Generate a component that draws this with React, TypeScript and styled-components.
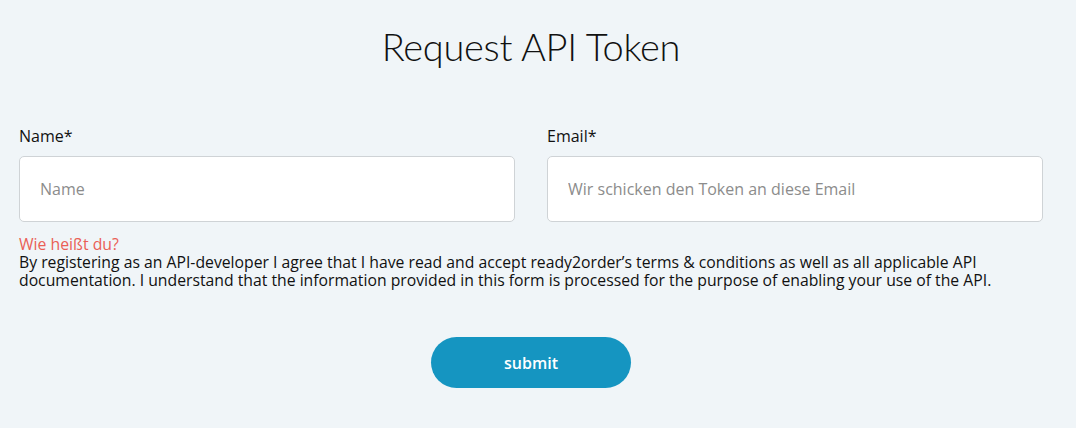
import React from "react"
import styled, { createGlobalStyle } from "styled-components"

const GlobalStyle = createGlobalStyle`
  html, body {
    margin: 0;
    padding: 0;
    background: #f0f5f8;
  }
  body {
    font-family: "Open Sans", "Liberation Sans", sans-serif;
    color: #111;
  }
`

const Page = styled.div`
  width: 1024px;
  padding: 22px 0 40px 19px;
`

const Title = styled.h1`
  margin: 0 0 55px;
  font-family: Lato, "Open Sans", sans-serif;
  font-weight: 300;
  font-size: 38px;
  line-height: 48px;
  letter-spacing: -0.3px;
  text-align: center;
  color: #111;
`

const Fields = styled.div`
  display: grid;
  grid-template-columns: 1fr 1fr;
  column-gap: 32px;
`

const Field = styled.label`
  display: flex;
  flex-direction: column;
`

const Label = styled.span`
  font-size: 16px;
  line-height: 22px;
  margin-bottom: 9px;
  color: #111;
`

const Input = styled.input`
  box-sizing: border-box;
  height: 66px;
  padding: 0 20px;
  border: 1px solid #cfd3d6;
  border-radius: 5px;
  background: #fff;
  font-family: "Open Sans", sans-serif;
  font-size: 16px;
  color: #333;
  outline: none;

  &::placeholder {
    color: #8c8c8c;
  }
`

const ErrorText = styled.div`
  margin-top: 13px;
  font-size: 15.8px;
  line-height: 18px;
  color: #ea5f56;
`

const Terms = styled.p`
  margin: 0;
  font-size: 15.75px;
  line-height: 18px;
  color: #111;
`

const Actions = styled.div`
  display: flex;
  justify-content: center;
  margin-top: 48px;
`

const SubmitButton = styled.button`
  width: 200px;
  height: 51px;
  border: none;
  border-radius: 26px;
  background: #1595c1;
  color: #fff;
  font-family: "Open Sans", sans-serif;
  font-weight: 600;
  font-size: 16px;
  cursor: pointer;
`

export default function App() {
  return (
    <>
      <GlobalStyle />
      <Page>
        <Title>Request API Token</Title>
        <Fields>
          <Field>
            <Label>Name*</Label>
            <Input placeholder="Name" />
          </Field>
          <Field>
            <Label>Email*</Label>
            <Input placeholder="Wir schicken den Token an diese Email" />
          </Field>
        </Fields>
        <ErrorText>Wie heißt du?</ErrorText>
        <Terms>
          By registering as an API-developer I agree that I have read and
          accept ready2order’s terms &amp; conditions as well as all applicable
          API documentation. I understand that the information provided in
          this form is processed for the purpose of enabling your use of the
          API.
        </Terms>
        <Actions>
          <SubmitButton>submit</SubmitButton>
        </Actions>
      </Page>
    </>
  )
}
